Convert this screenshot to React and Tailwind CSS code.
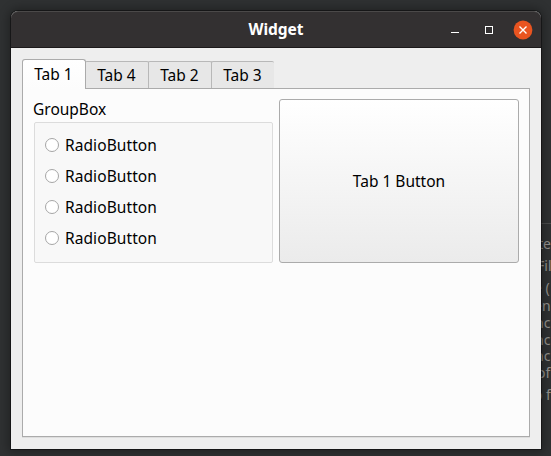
import React from 'react';

const backdropLines = [
  { text: 'te', top: 'top-[236px]', left: 'left-[538px]' },
  { text: 'Fil', top: 'top-[258px]', left: 'left-[537px]' },
  { text: 'e (', top: 'top-[280px]', left: 'left-[534px]' },
  { text: 'en', top: 'top-[298px]', left: 'left-[534px]' },
  { text: 'nc', top: 'top-[315px]', left: 'left-[535px]' },
  { text: 'nc', top: 'top-[332px]', left: 'left-[535px]' },
  { text: 'nc', top: 'top-[348px]', left: 'left-[535px]' },
  { text: 'of', top: 'top-[365px]', left: 'left-[537px]' },
  { text: 'o f', top: 'top-[387px]', left: 'left-[534px]' },
];

function Backdrop() {
  return (
    <div className="absolute inset-0 overflow-hidden text-[14px] leading-4 text-[#94918e]">
      <div className="absolute right-0 top-[223px] h-px w-3 bg-[#4a4b4c]" />
      {backdropLines.map((line) => (
        <span key={line.top} className={`absolute h-4 whitespace-pre ${line.top} ${line.left}`}>
          {line.text}
        </span>
      ))}
    </div>
  );
}

function TitleBar() {
  return (
    <header className="grid h-[37px] grid-cols-[1fr_auto_1fr] items-center rounded-t-[7px] border-t border-b border-t-[#4b4949] border-b-[#1c191a] bg-[#333031] text-white">
      <span />
      <h1 className="relative -top-px text-[15.5px] leading-5 font-bold">Widget</h1>
      <div className="flex h-full items-center justify-end pr-2">
        <svg width="86" height="20" viewBox="0 0 86 20" fill="none">
          <path d="M4 12.5h8" stroke="#fff" />
          <rect x="38.5" y="6.5" width="7" height="7" stroke="#fff" />
          <circle cx="76" cy="10" r="9.4" fill="#e95420" />
          <path d="M72.5 6.5l7 7M79.5 6.5l-7 7" stroke="#fff" strokeWidth="1.4" />
        </svg>
      </div>
    </header>
  );
}

function Tabs() {
  return (
    <nav className="flex h-[30px] items-end">
      <button className="z-10 h-[30px] w-16 rounded-t-[3px] border border-b-0 border-[#ababab] bg-gradient-to-b from-white to-[#fcfcfc] pr-px pb-0.5 text-center leading-[26px]">
        Tab 1
      </button>
      <div className="flex h-7 items-start">
        <button className="-ml-px h-[27px] w-16 rounded-t-[2px] border border-b-0 border-[#b8b8b8] bg-[#e7e7e7] pr-px leading-[26px]">
          Tab 4
        </button>
        <button className="-ml-px h-[27px] w-16 rounded-t-[2px] border border-b-0 border-[#b8b8b8] bg-[#e7e7e7] pr-px leading-[26px]">
          Tab 2
        </button>
        <button className="-ml-px h-[27px] w-[63px] rounded-t-[2px] border border-r-0 border-b-0 border-[#b8b8b8] bg-[#e7e7e7] pr-px leading-[26px]">
          Tab 3
        </button>
      </div>
    </nav>
  );
}

function Radio() {
  return (
    <label className="flex h-[31px] items-center gap-1.5 tracking-[0.08px]">
      <span className="mb-px size-[14px] rounded-full border border-[#a6a6a6] bg-white" />
      RadioButton
    </label>
  );
}

export default function App() {
  return (
    <div className="relative h-[456px] w-[551px] overflow-hidden bg-[#2f3132] pt-[11px] pl-[11px] font-['Noto_Sans','Open_Sans',sans-serif] text-[15.5px] text-black">
      <Backdrop />
      <main className="relative flex h-[438px] w-[530px] flex-col rounded-t-[7px] bg-[#eeeeee] shadow-[0_0_10px_3px_rgba(0,0,0,0.3),0_0_0_1px_rgba(0,0,0,0.4)]">
        <TitleBar />
        <div className="flex flex-1 flex-col px-[11px] pt-[11px] pb-3">
          <Tabs />
          <section className="-mt-px flex h-[349px] items-start gap-1.5 border border-[#ababab] bg-[#fcfcfc] px-2.5 pt-2.5 shadow-[0_1px_0_#dedede]">
            <fieldset className="w-[240px]">
              <div className="h-[23px] leading-[21px]">GroupBox</div>
              <div className="ml-px h-[141px] rounded-[2px] border border-[#dcdcdc] bg-[#f8f8f8] pt-[7px] pl-2.5">
                <Radio />
                <Radio />
                <Radio />
                <Radio />
              </div>
            </fieldset>
            <button className="h-[164px] w-[240px] rounded-[3px] border border-[#ababab] bg-gradient-to-b from-white to-[#ebebeb] pt-0.5">
              Tab 1 Button
            </button>
          </section>
        </div>
      </main>
    </div>
  );
}
